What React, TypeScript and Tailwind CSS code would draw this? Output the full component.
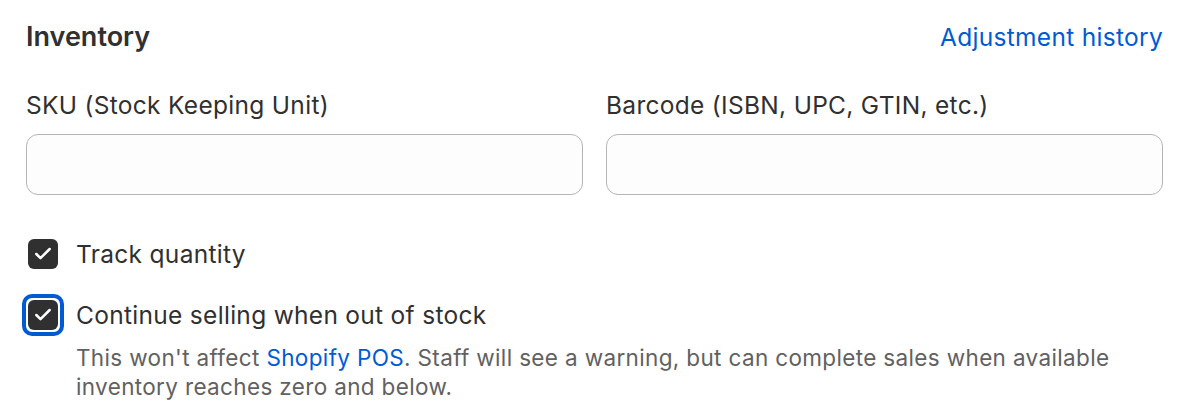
import { Check } from "lucide-react"

function CheckBox({ focused }: { focused?: boolean }) {
  return (
    <span
      className={
        "flex h-[42px] w-[42px] shrink-0 items-center justify-center rounded-[10px] " +
        (focused ? "border-[4px] border-[#005bd3] bg-white" : "")
      }
    >
      <span className="flex h-[30px] w-[30px] items-center justify-center rounded-[6px] bg-[#303030]">
        <Check className="h-[20px] w-[20px] text-white" strokeWidth={3} />
      </span>
    </span>
  )
}

export default function App() {
  return (
    <div
      className="h-[420px] w-[1180px] bg-white pl-[26px] pr-[17px] pt-[20px] text-[#303030]"
      style={{ fontFamily: "Inter, 'Noto Sans', sans-serif" }}
    >
      <div className="flex items-center justify-between">
        <h2 className="text-[27px] font-semibold leading-[34px]">Inventory</h2>
        <a className="text-[24.5px] leading-[34px] tracking-[0.3px] text-[#005bd3]">Adjustment history</a>
      </div>

      <div className="mt-[36px] grid grid-cols-2 gap-x-[23px]">
        <div>
          <label className="block text-[24.5px] leading-[30px] tracking-[0.3px]">SKU (Stock Keeping Unit)</label>
          <input className="mt-[14px] block h-[61px] w-full rounded-[12px] border border-[#b5b5b5] bg-[#fdfdfd]" />
        </div>
        <div>
          <label className="block text-[24.5px] leading-[30px] tracking-[0.3px]">Barcode (ISBN, UPC, GTIN, etc.)</label>
          <input className="mt-[14px] block h-[61px] w-full rounded-[12px] border border-[#b5b5b5] bg-[#fdfdfd]" />
        </div>
      </div>

      <div className="ml-[-4px] mt-[38px] flex items-center gap-[12px]">
        <CheckBox />
        <span className="text-[24.5px] leading-[34px] tracking-[0.3px]">Track quantity</span>
      </div>

      <div className="ml-[-4px] mt-[19px] flex items-center gap-[12px]">
        <CheckBox focused />
        <span className="text-[24.5px] leading-[34px] tracking-[0.3px]">Continue selling when out of stock</span>
      </div>
      <p className="ml-[50px] mt-[7px] text-[22.5px] leading-[29px] tracking-[0.35px] text-[#616161]">
        This won't affect <a className="text-[#005bd3]">Shopify POS</a>. Staff will see a warning, but can complete sales when available
        <br />
        inventory reaches zero and below.
      </p>
    </div>
  )
}
